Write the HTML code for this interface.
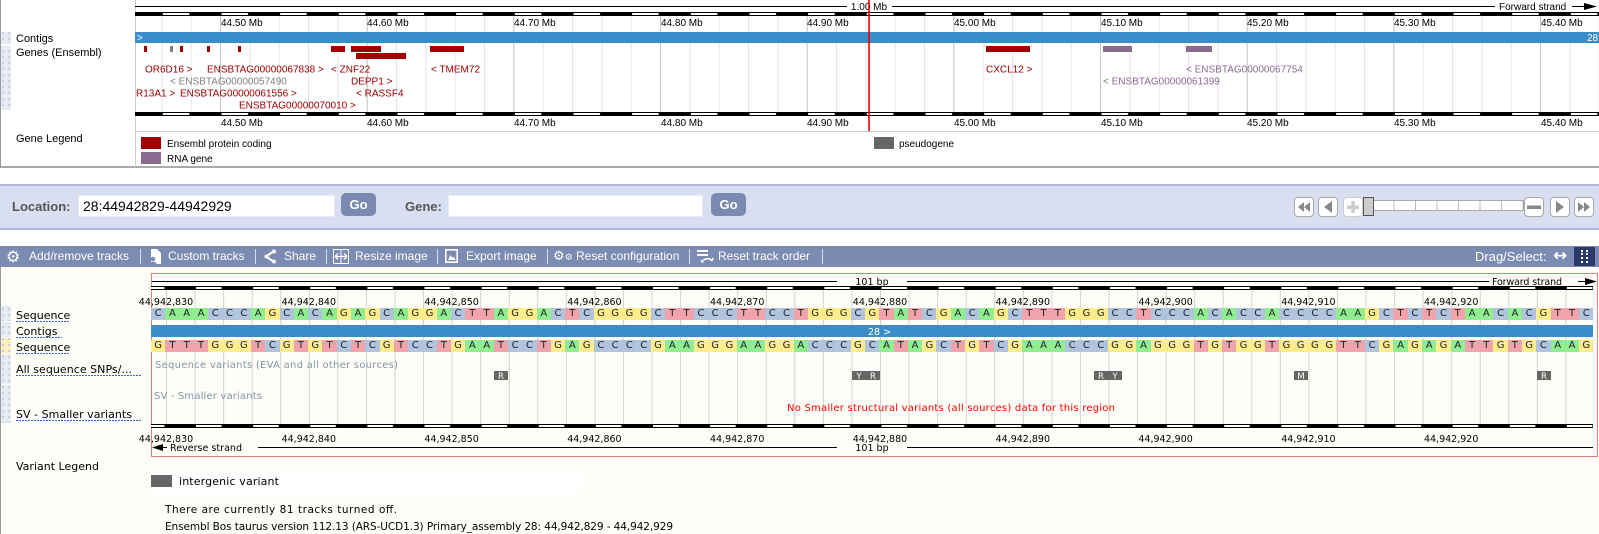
<!DOCTYPE html>
<html><head><meta charset="utf-8">
<style>
*{margin:0;padding:0;box-sizing:border-box}
body{width:1599px;height:534px;overflow:hidden;position:relative;background:#fff;font-family:"Liberation Sans",Arial,sans-serif}
.abs{position:absolute}
.row{position:absolute;left:151px;width:1442px;height:12px;display:flex;font:10px "DejaVu Sans",sans-serif;line-height:12px}
.row i{flex:1;text-align:center;font-style:normal;color:#222}
.A{background:#90ee90}.C{background:#b0c4de}.G{background:#ffec8b}.T{background:#f0a3ab}
.lbl{font-weight:bold;font-size:13px;color:#555}
.inp{background:#fff;border:1px solid #e8ebf3;height:22px}
.go{background:#7a8ab0;color:#fff;font-weight:bold;font-size:13px;border-radius:5px;text-align:center;line-height:23px;height:23px;width:35px}
.nb{position:absolute;top:197px;width:20px;height:20px;background:#fff;border:1px solid #aaa;border-radius:4px}
.tb{position:absolute;top:246px;height:21px;color:#fff;font-size:12px;line-height:21px;white-space:nowrap}
.sep{position:absolute;top:249px;width:1px;height:15px;background:#d8ddea}
</style></head><body>

<div class="abs" style="left:0;top:0;width:1599px;height:168px;border-left:1px solid #999;border-bottom:2px solid #aaa"></div>
<div class="abs" style="left:0;top:184px;width:1599px;height:46px;background:#d9dff1;border-top:2px solid #aeb8d8;border-bottom:2px solid #aeb8d8"></div>
<div class="abs" style="left:0;top:246px;width:1599px;height:21px;background:#7b8bb1"></div>
<div class="abs" style="left:0;top:267px;width:1599px;height:267px;background:#fefdf7;border-left:1px solid #999"></div>
<div class="abs" style="left:151px;top:470px;width:430px;height:24px;background:#fff"></div>

<svg class="abs" style="left:0;top:0" width="1599" height="534" xmlns="http://www.w3.org/2000/svg">
<defs>
<pattern id="g1" x="161.33" y="0" width="29.333" height="200" patternUnits="userSpaceOnUse"><rect width="1" height="200" fill="#e4e4e4"/></pattern>
<pattern id="g2" x="220" y="0" width="146.667" height="200" patternUnits="userSpaceOnUse"><rect width="1" height="200" fill="#c4c4c4"/></pattern>
<pattern id="s1" x="161.33" y="0" width="58.667" height="10" patternUnits="userSpaceOnUse"><rect x="1.5" width="26.5" height="10" fill="#fff"/></pattern>
<pattern id="g3" x="166" y="0" width="28.56" height="200" patternUnits="userSpaceOnUse"><rect width="1" height="200" fill="#d2d2d2"/></pattern>
<pattern id="s2" x="137.44" y="0" width="57.12" height="10" patternUnits="userSpaceOnUse"><rect x="1.5" width="25.5" height="10" fill="#fff"/></pattern>
<pattern id="dots" x="0" y="0" width="6" height="6" patternUnits="userSpaceOnUse"><rect x="2" y="2" width="2" height="2" fill="#c9cfdc"/></pattern>
</defs>

<line x1="135.5" y1="0" x2="135.5" y2="167" stroke="#ccc"/>
<rect x="1" y="32" width="10" height="12" fill="#e6eaf3"/><rect x="1" y="32" width="10" height="12" fill="url(#dots)"/>
<rect x="1" y="46" width="10" height="64" fill="#e6eaf3"/><rect x="1" y="46" width="10" height="64" fill="url(#dots)"/>
<g font-family="Liberation Sans,Arial,sans-serif" font-size="11" fill="#000">
<text x="16" y="42">Contigs</text>
<text x="16" y="56">Genes (Ensembl)</text>
<text x="16" y="142">Gene Legend</text>
</g>
<rect x="136" y="16" width="1463" height="96" fill="url(#g1)"/>
<rect x="136" y="16" width="1463" height="96" fill="url(#g2)"/>
<line x1="135" y1="6.5" x2="847" y2="6.5" stroke="#000"/>
<line x1="892" y1="6.5" x2="1495" y2="6.5" stroke="#000"/>
<line x1="1572" y1="6.5" x2="1585" y2="6.5" stroke="#000"/>
<polygon points="1584,3 1597,6.5 1584,10" fill="#000"/>
<g font-family="Liberation Sans,Arial,sans-serif" font-size="10" fill="#000">
<text x="869" y="10" text-anchor="middle">1.00 Mb</text>
<text x="1499" y="10">Forward strand</text>
</g>
<rect x="135" y="12" width="1464" height="4" fill="#000"/>
<rect x="135" y="13" width="1464" height="2" fill="url(#s1)"/>
<rect x="135" y="112" width="1464" height="4" fill="#000"/>
<rect x="135" y="113" width="1464" height="2" fill="url(#s1)"/>
<g font-family="Liberation Sans,Arial,sans-serif" font-size="10" fill="#000">
<text x="221" y="26">44.50 Mb</text><text x="367" y="26">44.60 Mb</text><text x="514" y="26">44.70 Mb</text><text x="661" y="26">44.80 Mb</text><text x="807" y="26">44.90 Mb</text><text x="954" y="26">45.00 Mb</text><text x="1101" y="26">45.10 Mb</text><text x="1247" y="26">45.20 Mb</text><text x="1394" y="26">45.30 Mb</text><text x="1541" y="26">45.40 Mb</text>
<text x="221" y="126">44.50 Mb</text><text x="367" y="126">44.60 Mb</text><text x="514" y="126">44.70 Mb</text><text x="661" y="126">44.80 Mb</text><text x="807" y="126">44.90 Mb</text><text x="954" y="126">45.00 Mb</text><text x="1101" y="126">45.10 Mb</text><text x="1247" y="126">45.20 Mb</text><text x="1394" y="126">45.30 Mb</text><text x="1541" y="126">45.40 Mb</text>
</g>
<rect x="135" y="32" width="1464" height="11" fill="#3a8dc9"/>
<g font-family="Liberation Sans,Arial,sans-serif" font-size="10" fill="#fff"><text x="137" y="41">&gt;</text><text x="1587" y="41">28</text></g>
<g fill="#a00000">
<rect x="144" y="46" width="3" height="6"/><rect x="180" y="46" width="3" height="6"/><rect x="207" y="46" width="3" height="6"/><rect x="238" y="46" width="3" height="6"/>
<rect x="331" y="46" width="14" height="6"/><rect x="351" y="46" width="30" height="6"/><rect x="356" y="53" width="50" height="6"/><rect x="430" y="46" width="34" height="6"/>
<rect x="986" y="46" width="44" height="6"/>
</g>
<rect x="170" y="46" width="3" height="6" fill="#808080"/>
<rect x="1103" y="46" width="29" height="6" fill="#8b6a8f"/><rect x="1186" y="46" width="26" height="6" fill="#8b6a8f"/>
<g font-family="Liberation Sans,Arial,sans-serif" font-size="10" fill="#a00000">
<text x="145" y="72.5">OR6D16 &gt;</text><text x="207" y="72.5">ENSBTAG00000067838 &gt;</text><text x="331" y="72.5">&lt; ZNF22</text><text x="431" y="72.5">&lt; TMEM72</text>
<text x="351" y="84.5">DEPP1 &gt;</text>
<text x="136" y="96.5">R13A1 &gt;</text><text x="180" y="96.5">ENSBTAG00000061556 &gt;</text><text x="356" y="96.5">&lt; RASSF4</text>
<text x="239" y="108.5">ENSBTAG00000070010 &gt;</text>
<text x="986" y="72.5">CXCL12 &gt;</text>
<text x="170" y="84.5" fill="#808080">&lt; ENSBTAG00000057490</text>
<text x="1186" y="72.5" fill="#8b6a8f">&lt; ENSBTAG00000067754</text>
<text x="1103" y="84.5" fill="#8b6a8f">&lt; ENSBTAG00000061399</text>
</g>
<line x1="135" y1="131.5" x2="1599" y2="131.5" stroke="#ccc"/>
<line x1="869" y1="0" x2="869" y2="131" stroke="#e00" stroke-width="1.6"/>
<rect x="141" y="137" width="20" height="12" fill="#a00000"/>
<rect x="141" y="152" width="20" height="12" fill="#8b6a8f"/>
<rect x="874" y="137" width="20" height="12" fill="#666"/>
<g font-family="Liberation Sans,Arial,sans-serif" font-size="10" fill="#000">
<text x="167" y="147">Ensembl protein coding</text><text x="167" y="162">RNA gene</text><text x="899" y="147">pseudogene</text>
</g>

<rect x="152" y="290" width="1441" height="134" fill="url(#g3)"/>
<rect x="151.5" y="273.5" width="1446" height="183" fill="none" stroke="#c00" stroke-dasharray="1,1"/>
<g font-family="DejaVu Sans,sans-serif" font-size="9.5" fill="#000">
<line x1="152" y1="281.5" x2="837" y2="281.5" stroke="#000"/>
<text x="872" y="285" text-anchor="middle">101 bp</text>
<line x1="907" y1="281.5" x2="1489" y2="281.5" stroke="#000"/>
<text x="1492" y="285" textLength="70">Forward strand</text>
<line x1="1578" y1="281.5" x2="1586" y2="281.5" stroke="#000"/>
<polygon points="1585,278 1597,281.5 1585,285" fill="#000"/>
<rect x="151" y="286" width="1442" height="4" fill="#000"/>
<rect x="151" y="287" width="1442" height="2" fill="url(#s2)"/>
<rect x="151" y="424" width="1442" height="4" fill="#000"/>
<rect x="151" y="425" width="1442" height="2" fill="url(#s2)"/>
<g text-anchor="middle">
<text x="166" y="305">44,942,830</text><text x="308.8" y="305">44,942,840</text><text x="451.6" y="305">44,942,850</text><text x="594.4" y="305">44,942,860</text><text x="737.2" y="305">44,942,870</text><text x="880" y="305">44,942,880</text><text x="1022.8" y="305">44,942,890</text><text x="1165.6" y="305">44,942,900</text><text x="1308.4" y="305">44,942,910</text><text x="1451.2" y="305">44,942,920</text>
<text x="166" y="442">44,942,830</text><text x="308.8" y="442">44,942,840</text><text x="451.6" y="442">44,942,850</text><text x="594.4" y="442">44,942,860</text><text x="737.2" y="442">44,942,870</text><text x="880" y="442">44,942,880</text><text x="1022.8" y="442">44,942,890</text><text x="1165.6" y="442">44,942,900</text><text x="1308.4" y="442">44,942,910</text><text x="1451.2" y="442">44,942,920</text>
</g>
<polygon points="152,447.5 163,444 163,451" fill="#000"/>
<line x1="162" y1="447.5" x2="167" y2="447.5" stroke="#000"/>
<text x="170" y="451" textLength="72">Reverse strand</text>
<line x1="258" y1="447.5" x2="837" y2="447.5" stroke="#000"/>
<text x="872" y="451" text-anchor="middle">101 bp</text>
<line x1="907" y1="447.5" x2="1593" y2="447.5" stroke="#000"/>
</g>
<rect x="151" y="325" width="1442" height="12" fill="#3a8dc9"/>
<text x="868" y="335" font-family="DejaVu Sans,sans-serif" font-size="9.5" fill="#fff">28 &gt;</text>
<g font-family="DejaVu Sans,sans-serif" font-size="10" fill="#8494a8">
<text x="155" y="368" textLength="243">Sequence variants (EVA and all other sources)</text>
<text x="154" y="399" textLength="108">SV - Smaller variants</text>
</g>
<text x="787" y="411" font-family="DejaVu Sans,sans-serif" font-size="10" fill="#f00" textLength="328">No Smaller structural variants (all sources) data for this region</text>
<g fill="#666">
<rect x="494" y="371" width="14" height="9"/><rect x="852" y="371" width="28" height="9"/><rect x="1094" y="371" width="28" height="9"/><rect x="1294" y="371" width="14" height="9"/><rect x="1537" y="371" width="14" height="9"/>
</g>
<g font-family="DejaVu Sans,sans-serif" font-size="8.5" fill="#fff" text-anchor="middle">
<text x="501" y="379">R</text><text x="859" y="379">Y</text><text x="873" y="379">R</text><text x="1101" y="379">R</text><text x="1115" y="379">Y</text><text x="1301" y="379">M</text><text x="1544" y="379">R</text>
</g>

<rect x="1" y="306" width="10" height="15" fill="#e6eaf3"/><rect x="1" y="306" width="10" height="15" fill="url(#dots)"/>
<rect x="1" y="322" width="10" height="15" fill="#e6eaf3"/><rect x="1" y="322" width="10" height="15" fill="url(#dots)"/>
<rect x="1" y="338" width="10" height="15" fill="#fdefc0"/><rect x="1" y="338" width="10" height="15" fill="url(#dots)"/>
<rect x="1" y="354" width="10" height="30" fill="#e6eaf3"/><rect x="1" y="354" width="10" height="30" fill="url(#dots)"/>
<rect x="1" y="385" width="10" height="38" fill="#e6eaf3"/><rect x="1" y="385" width="10" height="38" fill="url(#dots)"/>
<g font-family="DejaVu Sans,sans-serif" font-size="11" fill="#000">
<text x="16" y="319">Sequence</text><text x="16" y="335">Contigs</text><text x="16" y="351">Sequence</text>
<text x="16" y="373" textLength="116">All sequence SNPs/...</text>
<text x="16" y="418" textLength="116">SV - Smaller variants</text>
<text x="16" y="470" textLength="83">Variant Legend</text>
<text x="179" y="485" textLength="100">intergenic variant</text>
<text x="165" y="513" font-size="10.5" textLength="232">There are currently 81 tracks turned off.</text>
<text x="165" y="530" font-size="10.5" textLength="508">Ensembl Bos taurus version 112.13 (ARS-UCD1.3) Primary_assembly 28: 44,942,829 - 44,942,929</text>
</g>
<g stroke="#36c" stroke-dasharray="2,1">
<line x1="16" y1="321.5" x2="70" y2="321.5"/><line x1="16" y1="337.5" x2="62" y2="337.5"/><line x1="16" y1="353.5" x2="70" y2="353.5"/>
<line x1="16" y1="375.5" x2="142" y2="375.5"/><line x1="16" y1="420.5" x2="142" y2="420.5"/>
</g>
<rect x="151" y="475" width="21" height="12" fill="#666"/>
</svg>

<div class="row" style="top:308px"><i class=C>C</i><i class=A>A</i><i class=A>A</i><i class=A>A</i><i class=C>C</i><i class=C>C</i><i class=C>C</i><i class=A>A</i><i class=G>G</i><i class=C>C</i><i class=A>A</i><i class=C>C</i><i class=A>A</i><i class=G>G</i><i class=A>A</i><i class=G>G</i><i class=C>C</i><i class=A>A</i><i class=G>G</i><i class=G>G</i><i class=A>A</i><i class=C>C</i><i class=T>T</i><i class=T>T</i><i class=A>A</i><i class=G>G</i><i class=G>G</i><i class=A>A</i><i class=C>C</i><i class=T>T</i><i class=C>C</i><i class=G>G</i><i class=G>G</i><i class=G>G</i><i class=G>G</i><i class=C>C</i><i class=T>T</i><i class=T>T</i><i class=C>C</i><i class=C>C</i><i class=C>C</i><i class=T>T</i><i class=T>T</i><i class=C>C</i><i class=C>C</i><i class=T>T</i><i class=G>G</i><i class=G>G</i><i class=G>G</i><i class=C>C</i><i class=G>G</i><i class=T>T</i><i class=A>A</i><i class=T>T</i><i class=C>C</i><i class=G>G</i><i class=A>A</i><i class=C>C</i><i class=A>A</i><i class=G>G</i><i class=C>C</i><i class=T>T</i><i class=T>T</i><i class=T>T</i><i class=G>G</i><i class=G>G</i><i class=G>G</i><i class=C>C</i><i class=C>C</i><i class=T>T</i><i class=C>C</i><i class=C>C</i><i class=C>C</i><i class=A>A</i><i class=C>C</i><i class=A>A</i><i class=C>C</i><i class=C>C</i><i class=A>A</i><i class=C>C</i><i class=C>C</i><i class=C>C</i><i class=C>C</i><i class=A>A</i><i class=A>A</i><i class=G>G</i><i class=C>C</i><i class=T>T</i><i class=C>C</i><i class=T>T</i><i class=C>C</i><i class=T>T</i><i class=A>A</i><i class=A>A</i><i class=C>C</i><i class=A>A</i><i class=C>C</i><i class=G>G</i><i class=T>T</i><i class=T>T</i><i class=C>C</i></div>
<div class="row" style="top:340px"><i class=G>G</i><i class=T>T</i><i class=T>T</i><i class=T>T</i><i class=G>G</i><i class=G>G</i><i class=G>G</i><i class=T>T</i><i class=C>C</i><i class=G>G</i><i class=T>T</i><i class=G>G</i><i class=T>T</i><i class=C>C</i><i class=T>T</i><i class=C>C</i><i class=G>G</i><i class=T>T</i><i class=C>C</i><i class=C>C</i><i class=T>T</i><i class=G>G</i><i class=A>A</i><i class=A>A</i><i class=T>T</i><i class=C>C</i><i class=C>C</i><i class=T>T</i><i class=G>G</i><i class=A>A</i><i class=G>G</i><i class=C>C</i><i class=C>C</i><i class=C>C</i><i class=C>C</i><i class=G>G</i><i class=A>A</i><i class=A>A</i><i class=G>G</i><i class=G>G</i><i class=G>G</i><i class=A>A</i><i class=A>A</i><i class=G>G</i><i class=G>G</i><i class=A>A</i><i class=C>C</i><i class=C>C</i><i class=C>C</i><i class=G>G</i><i class=C>C</i><i class=A>A</i><i class=T>T</i><i class=A>A</i><i class=G>G</i><i class=C>C</i><i class=T>T</i><i class=G>G</i><i class=T>T</i><i class=C>C</i><i class=G>G</i><i class=A>A</i><i class=A>A</i><i class=A>A</i><i class=C>C</i><i class=C>C</i><i class=C>C</i><i class=G>G</i><i class=G>G</i><i class=A>A</i><i class=G>G</i><i class=G>G</i><i class=G>G</i><i class=T>T</i><i class=G>G</i><i class=T>T</i><i class=G>G</i><i class=G>G</i><i class=T>T</i><i class=G>G</i><i class=G>G</i><i class=G>G</i><i class=G>G</i><i class=T>T</i><i class=T>T</i><i class=C>C</i><i class=G>G</i><i class=A>A</i><i class=G>G</i><i class=A>A</i><i class=G>G</i><i class=A>A</i><i class=T>T</i><i class=T>T</i><i class=G>G</i><i class=T>T</i><i class=G>G</i><i class=C>C</i><i class=A>A</i><i class=A>A</i><i class=G>G</i></div>

<div class="abs lbl" style="left:12px;top:199px">Location:</div>
<div class="abs inp" style="left:78px;top:195px;width:257px"></div>
<div class="abs" style="left:83px;top:197px;font-size:14px;line-height:18px;color:#000">28:44942829-44942929</div>
<div class="abs go" style="left:341px;top:193px">Go</div>
<div class="abs lbl" style="left:405px;top:199px">Gene:</div>
<div class="abs inp" style="left:448px;top:195px;width:255px"></div>
<div class="abs go" style="left:711px;top:193px">Go</div>

<div class="nb" style="left:1294px"><svg width="18" height="18"><polygon points="9,4 3,9 9,14" fill="#888"/><polygon points="15,4 9,9 15,14" fill="#888"/></svg></div>
<div class="nb" style="left:1318px"><svg width="18" height="18"><polygon points="13,3 5,9 13,15" fill="#888"/></svg></div>
<div class="nb" style="left:1343px;border-color:#ccc"><svg width="18" height="18"><rect x="3" y="7.5" width="12" height="3.5" fill="#ccc"/><rect x="7.3" y="3" width="3.5" height="12" fill="#ccc"/></svg></div>
<div class="abs" style="left:1372px;top:200px;width:152px;height:11px;background:#fff;border:1px solid #aaa;background-image:repeating-linear-gradient(to right,transparent 0 20.5px,#bbb 20.5px 21.5px)"></div>
<div class="abs" style="left:1363px;top:197px;width:11px;height:19px;background:#ccc;border:1px solid #555"></div>
<div class="nb" style="left:1524px"><svg width="18" height="18"><rect x="2" y="7.5" width="14" height="3.5" fill="#888"/></svg></div>
<div class="nb" style="left:1550px"><svg width="18" height="18"><polygon points="5,3 13,9 5,15" fill="#888"/></svg></div>
<div class="nb" style="left:1574px"><svg width="18" height="18"><polygon points="3,4 9,9 3,14" fill="#888"/><polygon points="9,4 15,9 9,14" fill="#888"/></svg></div>

<div class="tb" style="left:6px;font-size:16px;font-family:'DejaVu Sans',sans-serif">⚙</div>
<div class="tb" style="left:29px">Add/remove tracks</div>
<div class="sep" style="left:140px"></div>
<svg class="abs" style="left:148px;top:248px" width="14" height="17"><path d="M3 1h6l4 4v11H3z" fill="#fff"/><circle cx="5" cy="11" r="2.3" fill="#7b8bb1"/><path d="M1.5 16c0-3 7-3 7 0z" fill="#7b8bb1"/></svg>
<div class="tb" style="left:168px">Custom tracks</div>
<div class="sep" style="left:255px"></div>
<svg class="abs" style="left:264px;top:249px" width="12" height="15"><path d="M10 2L2 7.5L10 13" stroke="#fff" stroke-width="2" fill="none"/><circle cx="10" cy="2.5" r="2" fill="#fff"/><circle cx="2.5" cy="7.5" r="2" fill="#fff"/><circle cx="10" cy="12.5" r="2" fill="#fff"/></svg>
<div class="tb" style="left:284px">Share</div>
<div class="sep" style="left:326px"></div>
<svg class="abs" style="left:333px;top:249px" width="16" height="15"><rect x="0.5" y="0.5" width="15" height="14" fill="none" stroke="#fff"/><rect x="7.5" y="0.5" width="1" height="14" fill="#fff"/><path d="M2 7.5h12M2 7.5l3-3M2 7.5l3 3M14 7.5l-3-3M14 7.5l-3 3" stroke="#fff" stroke-width="1.3" fill="none"/></svg>
<div class="tb" style="left:355px">Resize image</div>
<div class="sep" style="left:437px"></div>
<svg class="abs" style="left:445px;top:249px" width="13" height="14"><rect x="0.8" y="0.8" width="11.4" height="12.4" fill="none" stroke="#fff" stroke-width="1.6"/><path d="M3 11L5.5 6L7.5 9L9 7.5L10.5 11z" fill="#fff"/></svg>
<div class="tb" style="left:466px">Export image</div>
<div class="sep" style="left:547px"></div>
<div class="tb" style="left:553px;font-size:13px;font-family:'DejaVu Sans',sans-serif">⚙<span style="font-size:9px">⚙</span></div>
<div class="tb" style="left:576px">Reset configuration</div>
<div class="sep" style="left:689px"></div>
<svg class="abs" style="left:696px;top:248px" width="18" height="18"><rect x="1" y="2" width="11" height="2" fill="#fff"/><rect x="1" y="6" width="11" height="2" fill="#fff"/><path d="M7 13a5 4 0 0 1 9 0M16 13l-2-2M16 13l1-3M5 12l2 3" stroke="#fff" stroke-width="1.5" fill="none"/></svg>
<div class="tb" style="left:718px">Reset track order</div>
<div class="sep" style="left:822px"></div>
<div class="tb" style="left:1475px;font-size:13px">Drag/Select:</div>
<div class="tb" style="left:1553px;font-size:17px;font-family:'DejaVu Sans',sans-serif;font-weight:bold">↔</div>
<div class="abs" style="left:1574px;top:247px;width:21px;height:19px;background:#2b3a6d"><div style="position:absolute;left:7px;top:3px;width:7px;height:13px;border:2px dotted #fff"></div></div>
</body></html>
